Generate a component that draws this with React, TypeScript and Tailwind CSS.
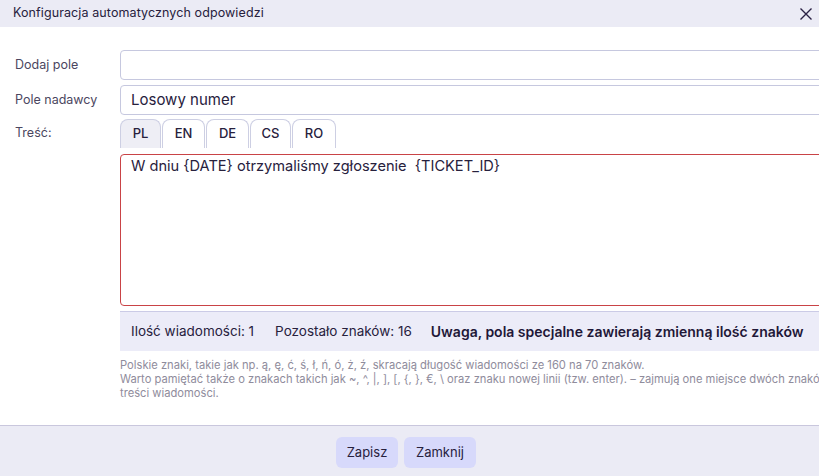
import { useState } from 'react';

const langs = [
  { code: 'PL', w: 'w-[41px]' },
  { code: 'EN', w: 'w-[43px]' },
  { code: 'DE', w: 'w-[43px]' },
  { code: 'CS', w: 'w-[41px]' },
  { code: 'RO', w: 'w-[44px]' },
];

/** Okno konfiguracji automatycznych odpowiedzi SMS. */
export default function App() {
  const [lang, setLang] = useState('PL');

  return (
    <div className="flex h-[476px] w-[819px] flex-col overflow-hidden bg-white font-['Inter',sans-serif] text-[#27213d]">
      <div className="flex h-[27px] shrink-0 items-center justify-between bg-[#ebebf5] pl-[13px] pr-[4px]">
        <span className="text-[12.5px] tracking-[0.1px]">Konfiguracja automatycznych odpowiedzi</span>
        <svg width="14" height="14" viewBox="0 0 14 14" className="mr-[2px]">
          <path d="M1.5 1.5l11 11M12.5 1.5l-11 11" stroke="#2a2145" strokeWidth="1.4" />
        </svg>
      </div>

      <div className="flex-1 pt-[23px]">
        <div className="flex w-[900px] flex-col gap-[5px]">
          <Row label="Dodaj pole">
            <div className="h-[30px] w-[780px] rounded-[4px] border border-[#c6c8df]" />
          </Row>
          <Row label="Pole nadawcy">
            <div className="flex h-[30px] w-[780px] items-center rounded-[4px] border border-[#c6c8df] px-[10px] text-[15px]">
              Losowy numer
            </div>
          </Row>
          <div className="-mt-[1px] flex">
            <div className="w-[120px] shrink-0 pl-[15px] pt-[5px] text-[12.5px] text-[#4b4660]">Treść:</div>
            <div className="flex flex-col">
              <div className="flex gap-[1px]">
                {langs.map((l) => (
                  <button
                    key={l.code}
                    onClick={() => setLang(l.code)}
                    className={
                      'flex h-[29px] items-center justify-center rounded-t-[8px] border border-b-0 border-[#cdcfe3] text-[13px] font-medium ' +
                      l.w +
                      (lang === l.code ? ' bg-[#eeeef5]' : ' bg-white')
                    }
                  >
                    {l.code}
                  </button>
                ))}
              </div>
              <div className="mt-[6px] h-[152px] w-[780px] rounded-[4px] border border-[#c94346] px-[10px] pt-[1px] text-[14.6px]">
                W dniu {'{DATE}'} otrzymaliśmy zgłoszenie&nbsp; {'{TICKET_ID}'}
              </div>
              <div className="mt-[5px] flex h-[40px] w-[780px] items-center gap-[21px] border-t border-[#cbcbe6] bg-[#ececf8] px-[11px] text-[13.5px]">
                <span>Ilość wiadomości: 1</span>
                <span>Pozostało znaków: 16</span>
                <span className="ml-[-2px] text-[14px] font-semibold text-[#1f1838]">Uwaga, pola specjalne zawierają zmienną ilość znaków</span>
              </div>
              <div className="mt-[7px] whitespace-nowrap text-[11.2px] leading-[14px] text-[#8f8c9c]">
                <div>Polskie znaki, takie jak np. ą, ę, ć, ś, ł, ń, ó, ż, ź, skracają długość wiadomości ze 160 na 70 znaków.</div>
                <div>Warto pamiętać także o znakach takich jak ~, ^, |, ], [, {'{'}, {'}'}, €, \ oraz znaku nowej linii (tzw. enter). – zajmują one miejsce dwóch znaków w</div>
                <div>treści wiadomości.</div>
              </div>
            </div>
          </div>
        </div>
      </div>

      <div className="flex h-[51px] shrink-0 items-start justify-center gap-[6px] border-t border-[#c9c7dd] bg-[#ebebf5] pr-[7px] pt-[11px]">
        <button className="h-[31px] w-[62px] rounded-[6px] bg-[#d7d9fb] text-[13px]">Zapisz</button>
        <button className="h-[31px] w-[72px] rounded-[6px] bg-[#d7d9fb] text-[13px]">Zamknij</button>
      </div>
    </div>
  );
}

function Row({ label, children }: { label: string; children: React.ReactNode }) {
  return (
    <div className="flex items-center">
      <div className="w-[120px] shrink-0 pl-[15px] text-[12.5px] text-[#4b4660]">{label}</div>
      {children}
    </div>
  );
}
